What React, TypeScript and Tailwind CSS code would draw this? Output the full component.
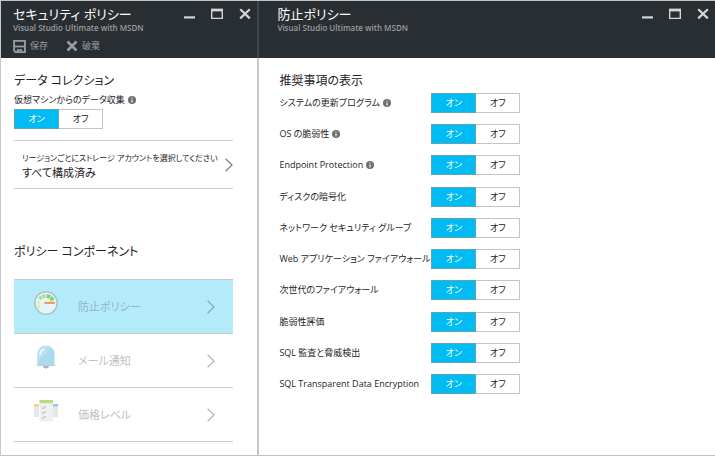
import { useId, useState } from "react";
import type { ReactNode } from "react";

function InfoIcon() {
  return (
    <svg viewBox="0 0 8 8" className="size-2 shrink-0" aria-hidden="true">
      <circle cx="4" cy="4" r="4" fill="#6b7074" />
      <path d="M4 3.4V6.4M4 1.5V2.6" stroke="#fff" strokeWidth="1.1" />
    </svg>
  );
}

function Chevron({ className }: { className: string }) {
  return (
    <svg viewBox="0 0 9 14" className={`h-[14px] w-[9px] shrink-0 ${className}`} fill="none" aria-hidden="true">
      <path d="M1.6 0.8L8 7L1.6 13.2" stroke="currentColor" strokeWidth="1.2" />
    </svg>
  );
}

function WindowButtons() {
  return (
    <div className="flex items-start gap-4 pt-[7px] text-[#d3d5d6]">
      <button type="button" aria-label="最小化">
        <svg viewBox="0 0 12 12" className="size-3">
          <path d="M1 9.4H12" stroke="currentColor" strokeWidth="2.2" />
        </svg>
      </button>
      <button type="button" aria-label="最大化">
        <svg viewBox="0 0 12 12" className="size-3" fill="none">
          <path d="M0.7 2V10.4H11.3V2" stroke="currentColor" strokeWidth="1.4" />
          <path d="M0 2H12" stroke="currentColor" strokeWidth="2.8" />
        </svg>
      </button>
      <button type="button" aria-label="閉じる">
        <svg viewBox="0 0 12 12" className="size-3">
          <path d="M1.2 1.2L10.8 10.4M10.8 1.2L1.2 10.4" stroke="currentColor" strokeWidth="2.2" />
        </svg>
      </button>
    </div>
  );
}

function BladeHeader({ title, className, children }: { title: string; className: string; children?: ReactNode }) {
  return (
    <header className={`h-[57px] bg-[#292e32] pr-[6px] ${className}`}>
      <div className="flex justify-between">
        <div>
          <h1 className="pt-[3px] text-[13px] leading-[20px] text-white">{title}</h1>
          <p className="text-[8px] leading-[8px] font-semibold text-[#9a9d9f]">Visual Studio Ultimate with MSDN</p>
        </div>
        <WindowButtons />
      </div>
      {children}
    </header>
  );
}

function Toggle({ labelledBy }: { labelledBy: string }) {
  const [on, setOn] = useState(true);
  const active = "bg-[#00bcf2] text-white border-[#5fa3b8]";
  const idle = "bg-white text-[#222] border-[#c3c5c6]";
  return (
    <div role="group" aria-labelledby={labelledBy} className="flex h-5 w-[89px] shrink-0 text-[9px] leading-[18px]">
      <button type="button" aria-pressed={on} onClick={() => setOn(true)} className={`w-[45px] border ${on ? active : idle}`}>
        オン
      </button>
      <button type="button" aria-pressed={!on} onClick={() => setOn(false)} className={`flex-1 border border-l-0 ${on ? idle : active}`}>
        オフ
      </button>
    </div>
  );
}

function GaugeIcon() {
  return (
    <svg viewBox="0 0 24 24" className="size-6" fill="none" aria-hidden="true">
      <circle cx="12" cy="12" r="11.2" fill="#e6f6f6" stroke="#a9c3c8" strokeWidth="1.5" />
      <path d="M5.4 17A8 8 0 0 1 4.8 9.6" stroke="#d3efc4" strokeWidth="3" strokeDasharray="3.2 0.7" />
      <path d="M5.6 8A7.5 7.5 0 0 1 11.6 5" stroke="#a9dd90" strokeWidth="3.6" strokeDasharray="3.1 0.6" />
      <path d="M12.6 5A7.5 7.5 0 0 1 19 10" stroke="#86d06f" strokeWidth="3.8" strokeDasharray="3.6 0.6" />
      <path d="M10.5 10.8H21V13H10.5Z" fill="#e8a25c" />
    </svg>
  );
}

function BellIcon() {
  return (
    <svg viewBox="0 0 24 24" className="size-6" aria-hidden="true">
      <path d="M8.5 20.5H15.5L14 23H13L12 24L11 23H10Z" fill="#b0b2b4" />
      <path d="M3.5 19V9C3.5 4 7 0.8 12 0.8S20.5 4 20.5 9V19L22 21H2Z" fill="#acd9ed" />
      <path d="M3.5 17V9C3.5 4 7 0.8 12 0.8C14 0.8 15.8 1.3 17.2 2.3Z" fill="#bce2f2" />
      <path d="M6 9.5C6.3 6.5 7.9 4.7 10.6 3.9" stroke="#f5fbfe" strokeWidth="1.6" fill="none" />
    </svg>
  );
}

function PriceIcon() {
  return (
    <svg viewBox="0 0 24 24" className="size-6" fill="none" aria-hidden="true">
      <path d="M0 6H5V18H0ZM19 6H24V18H19Z" fill="#e6e7e8" />
      <path d="M0 5H5V7.5H0Z" fill="#ffcf86" />
      <path d="M19 5H24V7.5H19Z" fill="#93cbe5" />
      <path d="M5.5 1H19V22.5H5.5Z" fill="#f0f0f0" />
      <path d="M5.5 1H19V4.2H5.5Z" fill="#badb7f" />
      <path d="M8 8.5L9.2 9.7L11.5 7M8 13.5L9.2 14.7L11.5 12M8 18.5L9.2 19.7L11.5 17" stroke="#a4a7a9" />
    </svg>
  );
}

const components = [
  { label: "防止ポリシー", icon: <GaugeIcon />, selected: true },
  { label: "メール通知", icon: <BellIcon />, selected: false },
  { label: "価格レベル", icon: <PriceIcon />, selected: false },
];

const recommendations = [
  { label: "システムの更新プログラム", info: true },
  { label: "OS の脆弱性", info: true },
  { label: "Endpoint Protection", info: true },
  { label: "ディスクの暗号化", info: false },
  { label: "ネットワーク セキュリティ グループ", info: false },
  { label: "Web アプリケーション ファイアウォール", info: false },
  { label: "次世代のファイアウォール", info: false },
  { label: "脆弱性評価", info: false },
  { label: "SQL 監査と脅威検出", info: false },
  { label: "SQL Transparent Data Encryption", info: false },
];

function RecommendationRow({ label, info }: { label: string; info: boolean }) {
  const id = useId();
  return (
    <li className="flex items-center">
      <div className="flex w-[152px] shrink-0 items-center gap-[3px] whitespace-nowrap">
        <span id={id} className="text-[9px] leading-[16px]">{label}</span>
        {info && <InfoIcon />}
      </div>
      <Toggle labelledBy={id} />
    </li>
  );
}

export default function App() {
  const collectId = useId();
  return (
    // Kana are set with the font's own proportional metrics.
    <div className="flex min-h-screen border-y border-[#bfc3c4] bg-white font-['Open_Sans','Noto_Sans_CJK_JP',sans-serif] text-[#1f2326] [font-feature-settings:'palt']">
      <section className="w-[36%] shrink-0 border-l border-[#c6c8c9]">
        <BladeHeader title="セキュリティ ポリシー" className="pl-3">
          <div className="flex gap-[18px] pt-[6px] text-[9px] leading-[16px] text-[#9a9d9f]">
            <button type="button" className="flex items-center gap-1">
              <svg viewBox="0 0 12 12" className="size-[13px]" fill="none" aria-hidden="true">
                <path d="M1 0.8H11V11.2H2.4L1 9.8Z" stroke="currentColor" strokeWidth="1.7" />
                <path d="M1 6H11" stroke="currentColor" strokeWidth="1.6" />
                <path d="M3.5 8.5H8.5V12H6.8V10H5.5V12H3.5Z" fill="currentColor" />
              </svg>
              保存
            </button>
            <button type="button" className="flex items-center gap-1">
              <svg viewBox="0 0 12 12" className="size-3" aria-hidden="true">
                <path d="M1.5 1.5L10.5 10.5M10.5 1.5L1.5 10.5" stroke="currentColor" strokeWidth="2.6" />
              </svg>
              破棄
            </button>
          </div>
        </BladeHeader>

        <div className="pr-6 pl-[13px]">
          <h2 className="pt-[13px] text-[12px] leading-[20px]">データ コレクション</h2>
          <div className="flex items-center gap-[3px]">
            <span id={collectId} className="text-[9px] leading-[18px]">仮想マシンからのデータ収集</span>
            <InfoIcon />
          </div>
          <Toggle labelledBy={collectId} />

          <button type="button" className="mt-[11px] flex h-[49px] w-full items-center justify-between border-y border-[#c9cbcc] pl-2 text-left">
            <span className="whitespace-nowrap">
              <span className="block text-[8px] leading-[15px]">リージョンごとにストレージ アカウントを選択してください</span>
              <span className="block text-[11px] leading-[15px]">すべて構成済み</span>
            </span>
            <Chevron className="text-[#7d8184]" />
          </button>

          <h2 className="pt-[53px] text-[12px] leading-[20px]">ポリシー コンポーネント</h2>
          <ul className="mt-[17px] border-t border-[#c3c8ca]">
            {components.map((c) => (
              <li key={c.label} className="border-b border-[#c9cbcc]">
                <button
                  type="button"
                  className={`flex h-[53px] w-full items-center pr-[18px] pl-5 text-[11px] leading-[20px] ${
                    c.selected ? "bg-[#b3ebfa] text-[#94b3cc]" : "text-[#bfc1c3]"
                  }`}
                >
                  <span className="pb-2">{c.icon}</span>
                  <span className="flex-1 pl-5 text-left">{c.label}</span>
                  <Chevron className={c.selected ? "text-[#86a9b5]" : "text-[#b2b5b7]"} />
                </button>
              </li>
            ))}
          </ul>
        </div>
      </section>

      <section className="min-w-0 flex-1">
        <BladeHeader title="防止ポリシー" className="border-l-2 border-[#42474b] pl-[18px]" />
        <div className="min-h-[calc(100vh-59px)] border-l-2 border-[#c6c8c9] pl-5">
          <h2 className="pt-[13px] text-[12px] leading-[20px]">推奨事項の表示</h2>
          <ul className="mt-[2px] flex h-[301px] flex-col justify-between">
            {recommendations.map((r) => (
              <RecommendationRow key={r.label} {...r} />
            ))}
          </ul>
        </div>
      </section>
    </div>
  );
}
